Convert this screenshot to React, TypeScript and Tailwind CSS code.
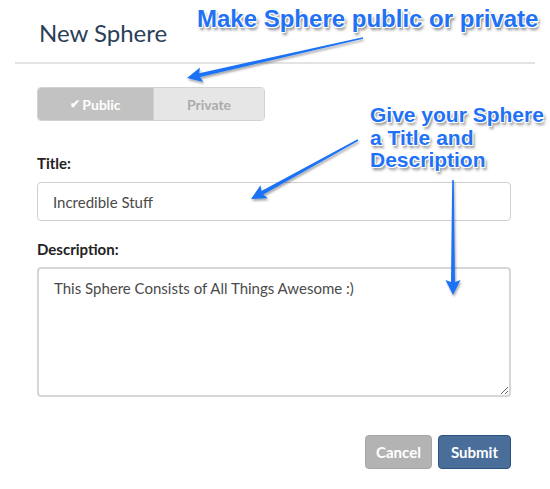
import React from "react";

const note =
  "absolute font-['Liberation_Sans',Arial,sans-serif] font-bold text-[#1f72f5] [text-shadow:-1px_-1px_0_#fff,1px_-1px_0_#fff,-1px_1px_0_#fff,1px_1px_0_#fff,0_-1px_0_#fff,0_1px_0_#fff,2px_3px_3px_rgba(0,0,0,0.5)]";

function arrow(x1: number, y1: number, x2: number, y2: number) {
  const dx = x2 - x1;
  const dy = y2 - y1;
  const len = Math.hypot(dx, dy);
  const ux = dx / len;
  const uy = dy / len;
  const nx = -uy;
  const ny = ux;
  const hl = 15;
  const hw = 7.5;
  const bx = x2 - ux * hl;
  const by = y2 - uy * hl;
  const nb = 2;
  const pts = [
    [x1 + nx * 0.8, y1 + ny * 0.8],
    [bx + ux * 2 + nx * nb, by + uy * 2 + ny * nb],
    [bx + nx * hw, by + ny * hw],
    [x2, y2],
    [bx - nx * hw, by - ny * hw],
    [bx + ux * 2 - nx * nb, by + uy * 2 - ny * nb],
    [x1 - nx * 0.8, y1 - ny * 0.8],
  ];
  return pts.map((p) => p[0].toFixed(1) + "," + p[1].toFixed(1)).join(" ");
}

export default function App() {
  return (
    <div className="relative w-[550px] h-[489px] bg-white overflow-hidden font-['Lato',sans-serif]">
      {/* header */}
      <div className="mx-[15px] pl-[24px] pt-[17px] pb-[13px] border-b-2 border-[#e3e3e3]">
        <h1 className="text-[24px] leading-[32px] text-[#2b3e58]">New Sphere</h1>
      </div>

      <div className="pl-[37px] pr-[39px]">
        {/* public / private toggle */}
        <div className="mt-[23px] flex w-[228px] h-[34px] rounded-[4px] border border-[#d2d2d2] overflow-hidden text-[14px] font-bold">
          <div className="w-[115px] flex items-center justify-center bg-[#c2c2c2] text-white">
            <span className="mr-[2px] text-[12px]">✔</span>Public
          </div>
          <div className="flex-1 flex items-center justify-center bg-[#e6e6e6] text-[#ababab] border-l border-[#d2d2d2]">
            Private
          </div>
        </div>

        <label className="block mt-[32px] text-[15px] font-bold text-[#222] leading-[20px]">Title:</label>
        <input
          readOnly
          defaultValue="Incredible Stuff"
          className="mt-[9px] block w-full h-[39px] px-[15px] rounded-[4px] border border-[#cfcfcf] text-[15px] text-[#4a4a4a] outline-none font-['Lato',sans-serif]"
        />

        <label className="block mt-[18px] text-[15px] font-bold text-[#222] leading-[20px]">Description:</label>
        <textarea
          readOnly
          defaultValue="This Sphere Consists of All Things Awesome :)"
          className="mt-[8px] block w-full h-[130px] px-[15px] py-[8px] rounded-[4px] border-2 border-[#d6d6d6] text-[15px] text-[#4a4a4a] outline-none font-['Lato',sans-serif]"
        />

        <div className="mt-[38px] flex justify-end gap-[6px]">
          <button className="w-[67px] h-[34px] rounded-[4px] bg-[#b3b3b3] border border-[#a6a6a6] text-white text-[15px] font-bold">
            Cancel
          </button>
          <button className="w-[73px] h-[34px] rounded-[4px] bg-[#4a6e9a] border border-[#2c5283] text-white text-[15px] font-bold">
            Submit
          </button>
        </div>
      </div>

      {/* annotations */}
      <svg className="absolute left-0 top-0 pointer-events-none" width="550" height="489">
        <defs>
          <filter id="sh" x="-20%" y="-20%" width="140%" height="140%">
            <feDropShadow dx="1" dy="2" stdDeviation="1.2" floodColor="#000" floodOpacity="0.35" />
          </filter>
        </defs>
        <g fill="#1f72f5" filter="url(#sh)">
          <polygon points={arrow(363, 38, 187, 78)} />
          <polygon points={arrow(358, 140, 251, 199)} />
          <polygon points={arrow(453, 180, 453, 295)} />
        </g>
      </svg>

      <div className={note + " left-[197px] top-[7px] text-[24px] leading-[24px] whitespace-nowrap"}>
        Make Sphere public or private
      </div>
      <div className={note + " left-[370px] top-[104px] text-[21px] leading-[22.5px]"}>
        Give your Sphere
        <br />a Title and
        <br />
        Description
      </div>
    </div>
  );
}
